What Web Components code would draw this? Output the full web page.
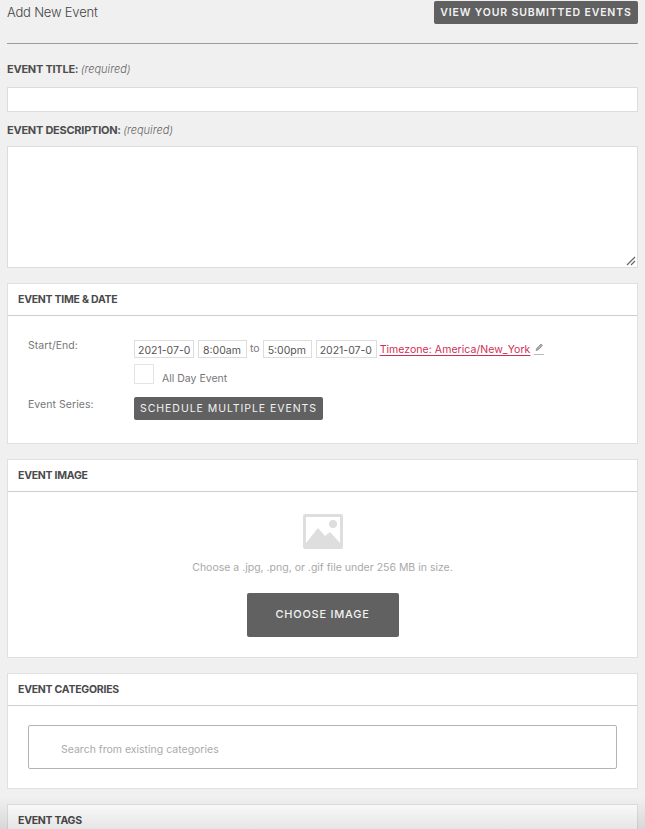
<!DOCTYPE html>
<html>
<head>
<meta charset="utf-8">
<style>
  html, body { margin: 0; height: 829px; overflow: hidden; background: #f0f0f0; }
  body { font-family: Inter, "Liberation Sans", sans-serif; color: #555; }
</style>
</head>
<body>
<event-form></event-form>

<template id="form-tpl">
  <style>
    :host { display: block; padding: 0 7px; position: relative; height: 829px; overflow: hidden; box-sizing: border-box; }
    .top { display: flex; justify-content: space-between; align-items: flex-start; height: 43px; padding-top: 1px; box-sizing: border-box; }
    h1 { margin: 3px 0 0; font-size: 13px; line-height: 16px; font-weight: 300; color: #444; letter-spacing: -.2px; }
    hr { border: 0; height: 1px; background: #9c9c9c; margin: 0 0 18px; }
    .cards { display: flex; flex-direction: column; gap: 15px; margin-top: 15px; }
    .fade { position: absolute; left: 0; right: 0; bottom: 0; height: 32px; background: linear-gradient(rgba(0,0,0,0), rgba(0,0,0,.1)); }
    .image { display: flex; flex-direction: column; align-items: center; padding-top: 22px; height: 165px; box-sizing: border-box; }
    .image svg { display: block; }
    .image p { margin: 11px 0 17px; font-size: 10.5px; line-height: 16px; color: #a9a9a9; }
    .search { margin: 19px 20px 20px; height: 44px; box-sizing: border-box; border: 1px solid #b4b4b4; border-radius: 2px; padding: 4px 0 0 32px; display: flex; align-items: center; font-size: 10.5px; color: #aaa; background: #fff; }
    .tags { height: 60px; }
  </style>
  <div class="top">
    <h1>Add New Event</h1>
    <ui-button kind="top">VIEW YOUR SUBMITTED EVENTS</ui-button>
  </div>
  <hr>
  <field-row label="EVENT TITLE:" height="25" gap="9"></field-row>
  <field-row label="EVENT DESCRIPTION:" height="122" gap="7" resize></field-row>
  <div class="cards">
    <ui-card title="EVENT TIME &amp; DATE" style="height:161px"><time-panel></time-panel></ui-card>
    <ui-card title="EVENT IMAGE" style="height:199px">
      <div class="image">
        <svg width="40" height="35" viewBox="0 0 40 35">
          <path fill="#dedede" fill-rule="evenodd" d="M2 0h36a2 2 0 0 1 2 2v31a2 2 0 0 1-2 2H2a2 2 0 0 1-2-2V2a2 2 0 0 1 2-2zM3 3v26h34V3z"/>
          <circle cx="30" cy="10" r="4" fill="#dedede"/>
          <path fill="#dedede" d="M3 29 15 14l7 8 5-4 10 11z"/>
        </svg>
        <p>Choose a .jpg, .png, or .gif file under 256 MB in size.</p>
        <ui-button kind="big">CHOOSE IMAGE</ui-button>
      </div>
    </ui-card>
    <ui-card title="EVENT CATEGORIES" style="height:116px">
      <div class="search">Search from existing categories</div>
    </ui-card>
    <ui-card title="EVENT TAGS" class="tags"></ui-card>
  </div>
  <div class="fade"></div>
</template>

<template id="button-tpl">
  <style>
    :host { display: inline-block; background: #616161; color: #f2f2f2; border-radius: 2px; box-sizing: border-box; text-align: center; font-weight: 500; white-space: nowrap; }
    :host([kind="top"]) { width: 204px; height: 23px; line-height: 23px; font-size: 10.5px; letter-spacing: .85px; font-weight: 600; }
    :host([kind="mid"]) { width: 189px; height: 23px; line-height: 23px; font-size: 10.5px; letter-spacing: .95px; font-weight: 400; }
    :host([kind="big"]) { width: 152px; height: 44px; line-height: 43px; font-size: 11px; letter-spacing: .75px; }
  </style>
  <slot></slot>
</template>

<template id="field-tpl">
  <style>
    :host { display: block; margin-bottom: 11px; }
    .label { font-size: 11px; line-height: 14px; height: 16px; font-weight: 700; color: #4d4d4d; letter-spacing: -.25px; }
    em { font-weight: 300; color: #666; letter-spacing: 0; }
    .box { position: relative; background: #fff; border: 1px solid #dcdcdc; box-sizing: border-box; }
    svg { position: absolute; right: 1px; bottom: 1px; }
  </style>
  <div class="label" id="label"><span id="text"></span> <em>(required)</em></div>
  <div class="box" id="box"></div>
</template>

<template id="card-tpl">
  <style>
    :host { display: block; background: #fff; border: 1px solid #e0e0e0; box-sizing: border-box; overflow: hidden; }
    .head { height: 31px; line-height: 32px; padding-left: 10px; font-size: 10.5px; font-weight: 700; color: #4a4a4a; letter-spacing: -.25px; border-bottom: 1px solid #cfcfcf; }
  </style>
  <div class="head" id="head"></div>
  <slot></slot>
</template>

<template id="time-tpl">
  <style>
    :host { display: grid; grid-template-columns: 106px auto; grid-auto-rows: min-content; padding: 23px 0 0 20px; font-size: 10.5px; color: #777; }
    .lbl { line-height: 14px; letter-spacing: .05px; }
    .line { display: flex; align-items: center; gap: 4px; height: 18px; margin-top: 1px; white-space: nowrap; }
    .inp { height: 18px; line-height: 17px; box-sizing: border-box; border: 1px solid #ddd; padding: 1px 3px 0; color: #555; font-size: 10.5px; background: #fff; }
    .tm { padding: 1px 4px 0; }
    .tz { color: #cf2e55; text-decoration: underline; font-size: 10.5px; text-decoration-thickness: 1px; text-underline-offset: 2px; letter-spacing: .05px; margin-left: -1px; }
    .pen { border-bottom: 1px solid #bbb; height: 13px; width: 10px; display: block; margin-top: -3px; overflow: hidden; }
    .check { display: flex; align-items: flex-end; gap: 8px; margin-top: 6px; height: 20px; margin-bottom: 13px; }
    .box { width: 20px; height: 20px; box-sizing: border-box; border: 1px solid #e4e4e4; }
    .check span { line-height: 13px; margin-bottom: -1px; }
    .series { padding-top: 1px; }
  </style>
  <div class="lbl">Start/End:</div>
  <div>
    <div class="line">
      <div class="inp" style="width:60px">2021-07-0</div>
      <div class="inp tm" style="width:49px">8:00am</div>
      <span style="margin:0 -1px 2px -1px">to</span>
      <div class="inp tm" style="width:49px">5:00pm</div>
      <div class="inp" style="width:61px">2021-07-0</div>
      <span class="tz">Timezone: America/New_York</span>
      <span class="pen"><svg width="10" height="12" viewBox="1 0 10 12"><path d="M3 9.5 3.5 7.5 8 3l1.5 1.5L5 9z" fill="#aaa" stroke="#888" stroke-width=".7"/></svg></span>
    </div>
    <div class="check"><div class="box"></div><span>All Day Event</span></div>
  </div>
  <div class="lbl series">Event Series:</div>
  <div><ui-button kind="mid">SCHEDULE MULTIPLE EVENTS</ui-button></div>
</template>

<script>
function stamp(el, id) {
  const root = el.attachShadow({ mode: 'open' });
  root.appendChild(document.getElementById(id).content.cloneNode(true));
  return root;
}

class EventForm extends HTMLElement {
  constructor() { super(); stamp(this, 'form-tpl'); }
}

class UiButton extends HTMLElement {
  constructor() { super(); stamp(this, 'button-tpl'); }
}

class FieldRow extends HTMLElement {
  constructor() { super(); this.root = stamp(this, 'field-tpl'); }

  connectedCallback() {
    this.root.getElementById('text').textContent = this.getAttribute('label');
    this.root.getElementById('label').style.marginBottom = `${this.getAttribute('gap')}px`;
    const box = this.root.getElementById('box');
    box.style.height = `${this.getAttribute('height')}px`;
    if (this.hasAttribute('resize')) {
      box.innerHTML = '<svg width="10" height="10" viewBox="0 0 10 10"><path d="M1 9 9 1M5 9 9 5" stroke="#666" stroke-width="1.2" fill="none"/></svg>';
    }
  }
}

class UiCard extends HTMLElement {
  constructor() { super(); this.root = stamp(this, 'card-tpl'); }

  connectedCallback() {
    this.root.getElementById('head').textContent = this.getAttribute('title');
  }
}

class TimePanel extends HTMLElement {
  constructor() { super(); stamp(this, 'time-tpl'); }
}

customElements.define('ui-button', UiButton);
customElements.define('field-row', FieldRow);
customElements.define('ui-card', UiCard);
customElements.define('time-panel', TimePanel);
customElements.define('event-form', EventForm);
</script>
</body>
</html>
